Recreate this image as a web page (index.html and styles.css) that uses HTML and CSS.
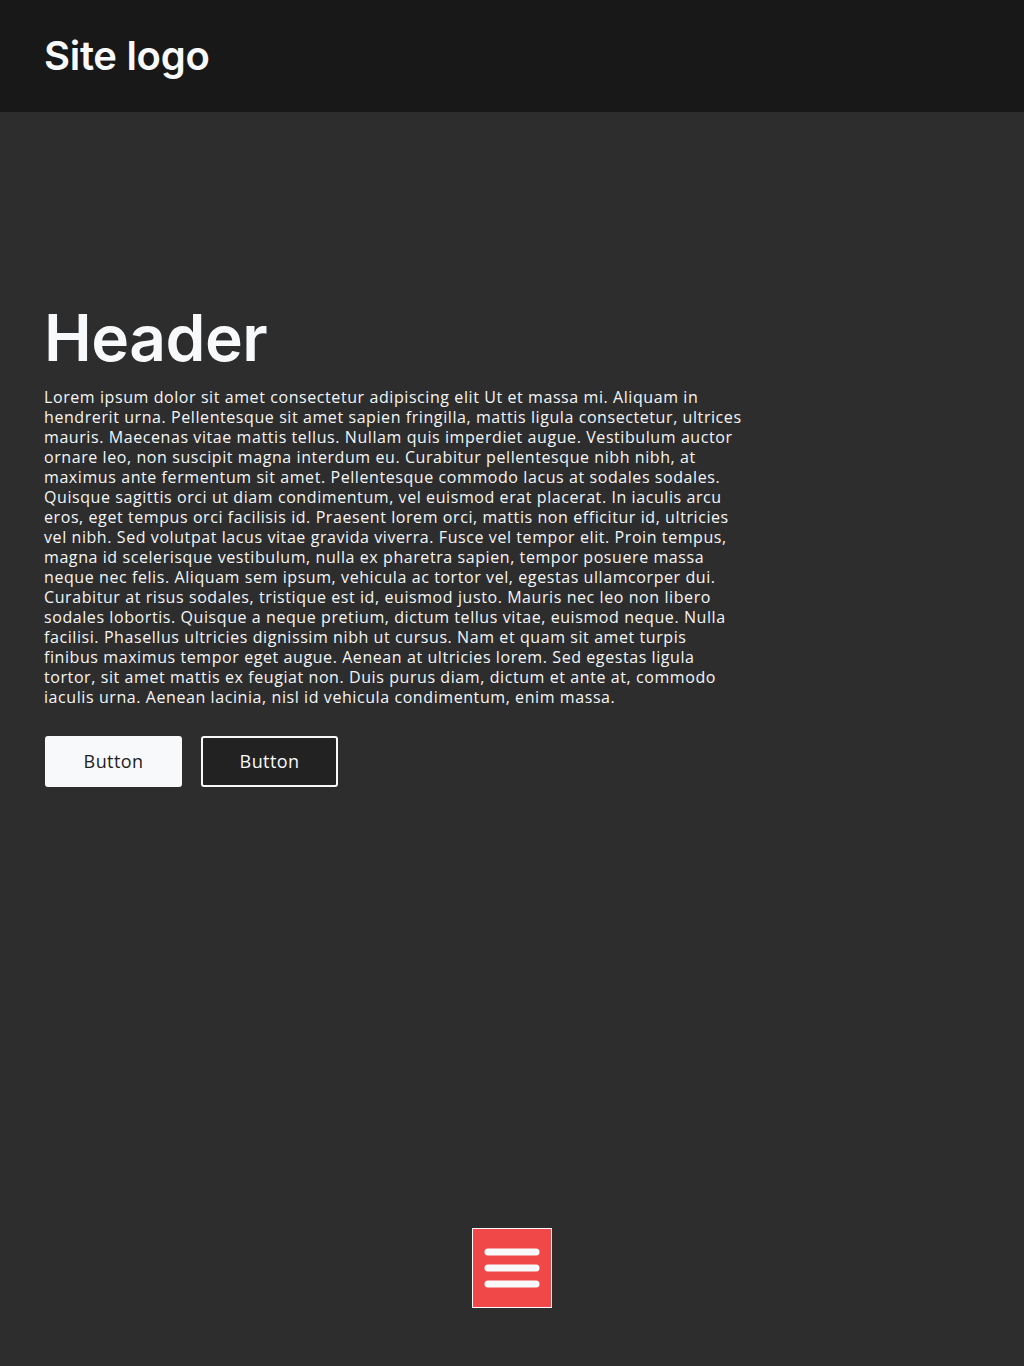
FILE: index.html
```html
<!DOCTYPE html>
<html lang="en">
<head>
<meta charset="utf-8">
<title>Site</title>
<link rel="stylesheet" href="styles.css">
</head>
<body>
<header class="topbar">
  <div class="logo">Site logo</div>
</header>
<main class="hero">
  <h1 class="hero-title">Header</h1>
  <p class="hero-text">Lorem ipsum dolor sit amet consectetur adipiscing elit Ut et massa mi. Aliquam in<br>
hendrerit urna. Pellentesque sit amet sapien fringilla, mattis ligula consectetur, ultrices<br>
mauris. Maecenas vitae mattis tellus. Nullam quis imperdiet augue. Vestibulum auctor<br>
ornare leo, non suscipit magna interdum eu. Curabitur pellentesque nibh nibh, at<br>
maximus ante fermentum sit amet. Pellentesque commodo lacus at sodales sodales.<br>
Quisque sagittis orci ut diam condimentum, vel euismod erat placerat. In iaculis arcu<br>
eros, eget tempus orci facilisis id. Praesent lorem orci, mattis non efficitur id, ultricies<br>
vel nibh. Sed volutpat lacus vitae gravida viverra. Fusce vel tempor elit. Proin tempus,<br>
magna id scelerisque vestibulum, nulla ex pharetra sapien, tempor posuere massa<br>
neque nec felis. Aliquam sem ipsum, vehicula ac tortor vel, egestas ullamcorper dui.<br>
Curabitur at risus sodales, tristique est id, euismod justo. Mauris nec leo non libero<br>
sodales lobortis. Quisque a neque pretium, dictum tellus vitae, euismod neque. Nulla<br>
facilisi. Phasellus ultricies dignissim nibh ut cursus. Nam et quam sit amet turpis<br>
finibus maximus tempor eget augue. Aenean at ultricies lorem. Sed egestas ligula<br>
tortor, sit amet mattis ex feugiat non. Duis purus diam, dictum et ante at, commodo<br>
iaculis urna. Aenean lacinia, nisl id vehicula condimentum, enim massa.</p>
  <div class="actions">
    <button class="btn btn-light" type="button">Button</button>
    <button class="btn btn-dark" type="button">Button</button>
  </div>
</main>
<button class="menu-btn" type="button" aria-label="Menu">
  <svg width="56" height="42" viewBox="0 0 56 42" aria-hidden="true">
    <line x1="4" y1="5" x2="52" y2="5" stroke="#f8f9fb" stroke-width="7" stroke-linecap="round"/>
    <line x1="4" y1="21" x2="52" y2="21" stroke="#f8f9fb" stroke-width="7" stroke-linecap="round"/>
    <line x1="4" y1="37" x2="52" y2="37" stroke="#f8f9fb" stroke-width="7" stroke-linecap="round"/>
  </svg>
</button>
</body>
</html>
```
FILE: styles.css
```css
html, body {
  margin: 0;
  padding: 0;
}
body {
  background: #2d2d2d;
  min-height: 1366px;
  color: #f8f9fb;
  font-family: "Open Sans", "DejaVu Sans", sans-serif;
}
.topbar {
  height: 112px;
  background: #181818;
  display: flex;
  align-items: center;
  padding: 0 44px;
}
.logo {
  font-family: "Inter", "Open Sans", sans-serif;
  font-weight: 600;
  font-size: 40px;
  letter-spacing: -0.3px;
  color: #f8f9fb;
  line-height: 1;
  margin-top: -1px;
}
.hero {
  padding: 187px 44px 0;
}
.hero-title {
  margin: 0;
  font-family: "Inter", "Open Sans", sans-serif;
  font-weight: 600;
  font-size: 64px;
  line-height: 77px;
  letter-spacing: -0.5px;
  color: #f8f9fb;
}
.hero-text {
  margin: 11px 0 0;
  font-size: 16px;
  line-height: 20px;
  letter-spacing: 0.58px;
  white-space: nowrap;
  color: #f4f5f7;
}
.actions {
  display: flex;
  gap: 19px;
  margin-top: 29px;
  padding-left: 1px;
}
.btn {
  width: 137px;
  height: 51px;
  font-family: "Open Sans", sans-serif;
  font-size: 18px;
  letter-spacing: 0.4px;
  line-height: 1;
  border-radius: 3px;
  cursor: pointer;
  padding: 0 0 2px;
}
.btn-light {
  background: #f8f9fb;
  color: #222222;
  border: none;
}
.btn-dark {
  background: #222222;
  color: #f8f9fb;
  border: 2px solid #f8f9fb;
}
.menu-btn {
  position: absolute;
  left: 472px;
  top: 1228px;
  width: 80px;
  height: 80px;
  background: #f04848;
  border: 1px solid #f8f9fb;
  padding: 0;
  display: flex;
  align-items: center;
  justify-content: center;
}
```
